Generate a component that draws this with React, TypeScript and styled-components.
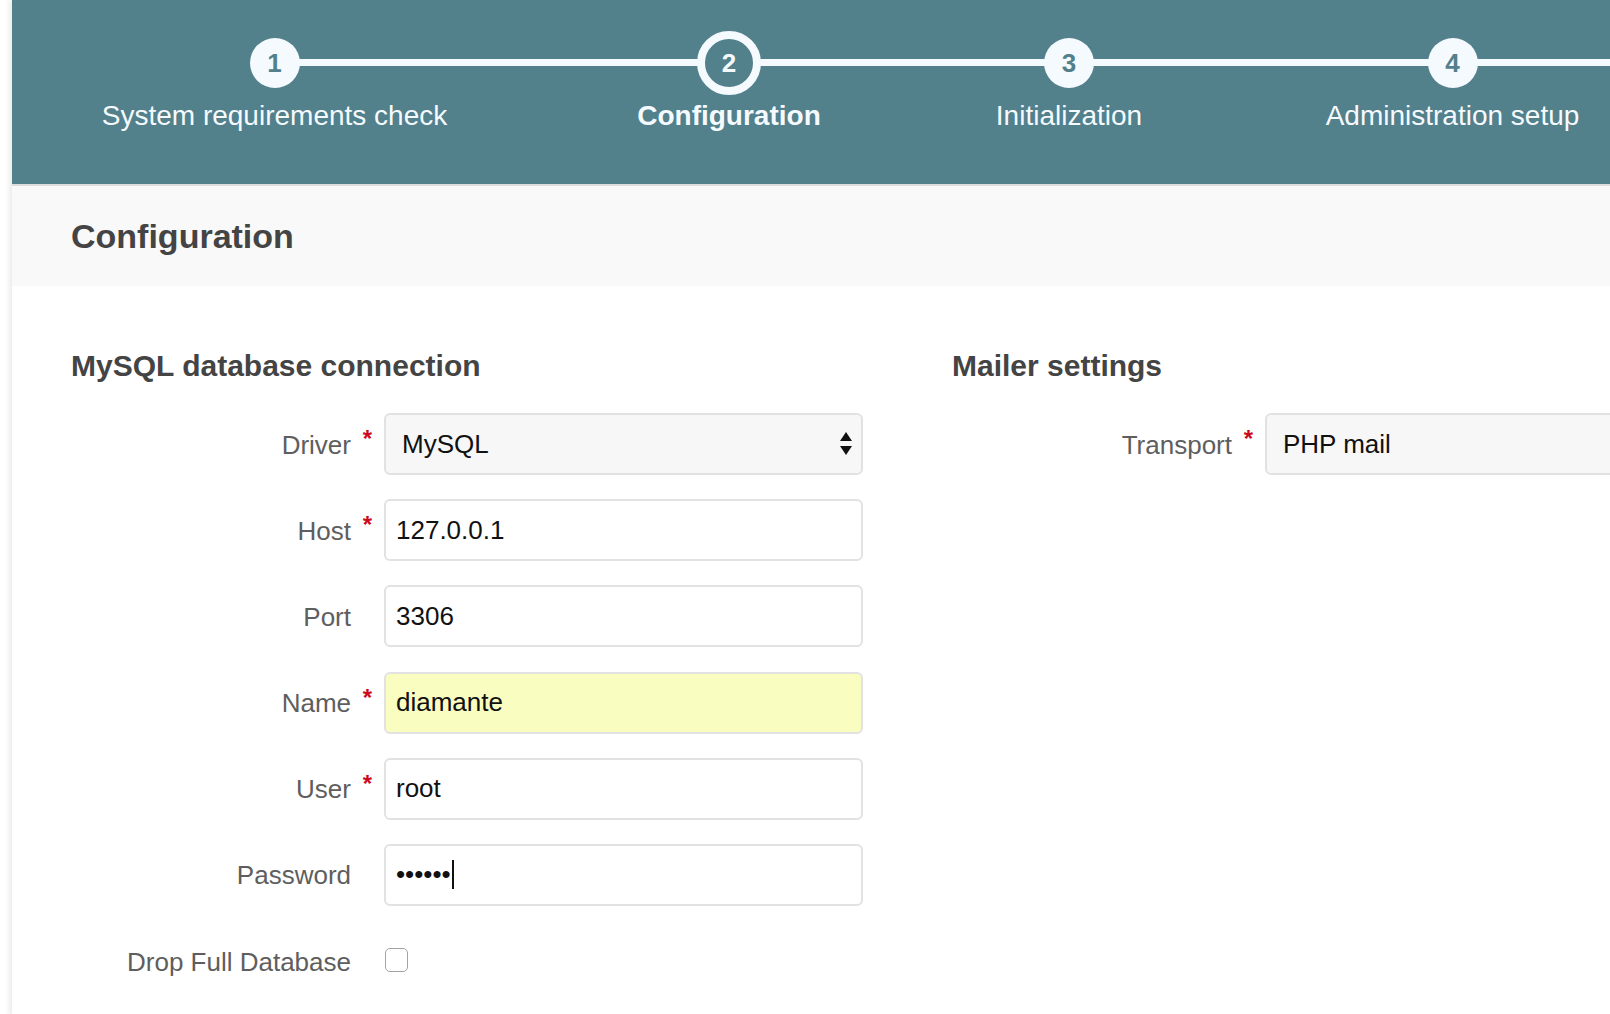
import React from 'react';
import styled, { createGlobalStyle } from 'styled-components';

const teal = '#52808b';
const light = '#f5faff';

const GlobalStyle = createGlobalStyle`
  html, body {
    margin: 0;
    padding: 0;
    background: #fff;
    overflow: hidden;
  }
  body {
    font-family: "Liberation Sans", Arial, Helvetica, sans-serif;
  }
`;

const Page = styled.div`
  margin-left: 12px;
  min-height: 1014px;
  background: #fff;
  box-shadow: -3px 0 5px rgba(0, 0, 0, 0.08);
  overflow: hidden;
`;

const Steps = styled.ol`
  display: grid;
  grid-template-columns: 525px 384px 296px 471px;
  height: 184px;
  margin: 0;
  padding: 0;
  list-style: none;
  background: ${teal};
  border-bottom: 2px solid #ddd;
  overflow: hidden;
`;

const Step = styled.li<{ $first?: boolean }>`
  position: relative;
  display: flex;
  flex-direction: column;
  align-items: center;
  padding-top: 31px;

  &::before {
    content: '';
    position: absolute;
    top: 59px;
    left: ${(p) => (p.$first ? '50%' : '0')};
    right: 0;
    height: 7px;
    background: ${light};
  }
`;

const CircleSlot = styled.div`
  position: relative;
  z-index: 1;
  height: 64px;
  display: flex;
  align-items: center;
`;

const Circle = styled.span<{ $active?: boolean }>`
  box-sizing: border-box;
  width: ${(p) => (p.$active ? 64 : 50)}px;
  height: ${(p) => (p.$active ? 64 : 50)}px;
  border-radius: 50%;
  border: ${(p) => (p.$active ? `8px solid ${light}` : 'none')};
  background: ${(p) => (p.$active ? teal : light)};
  color: ${(p) => (p.$active ? light : teal)};
  display: flex;
  align-items: center;
  justify-content: center;
  font-size: 26px;
  font-weight: bold;
`;

const StepLabel = styled.span<{ $active?: boolean }>`
  margin-top: 5px;
  font-size: 28px;
  line-height: 32px;
  font-weight: ${(p) => (p.$active ? 'bold' : 'normal')};
  color: ${light};
  white-space: nowrap;
`;

const TitleBar = styled.header`
  height: 100px;
  display: flex;
  align-items: center;
  padding-left: 59px;
  background: #f9f9f9;
`;

const Title = styled.h1`
  margin: 0;
  font-size: 34px;
  font-weight: bold;
  color: #444;
`;

const Content = styled.div`
  display: grid;
  grid-template-columns: 792px 792px;
  column-gap: 89px;
  padding: 62px 0 0 59px;
`;

const Section = styled.section`
  display: flex;
  flex-direction: column;
`;

const SectionTitle = styled.h2`
  margin: 0 0 29px;
  font-size: 30px;
  line-height: 36px;
  font-weight: bold;
  color: #444;
`;

const Row = styled.div`
  display: grid;
  grid-template-columns: 280px 33px 1fr;
  align-items: center;
  height: 62px;
  margin-bottom: 24.2px;
`;

const Label = styled.label`
  padding-top: 2px;
  text-align: right;
  font-size: 26px;
  color: #5e5e5e;
  white-space: nowrap;
`;

const Required = styled.span`
  align-self: start;
  margin-top: 14px;
  text-align: center;
  font-size: 24px;
  line-height: 24px;
  font-weight: bold;
  color: #cc0a1e;
`;

const fieldBox = `
  box-sizing: border-box;
  width: 100%;
  height: 62px;
  border: 2px solid #e2e2e2;
  border-radius: 6px;
  font-family: "Liberation Sans", Arial, sans-serif;
  font-size: 26px;
  color: #111;
`;

const TextInput = styled.input<{ $autofill?: boolean }>`
  ${fieldBox}
  padding: 0 10px;
  background: ${(p) => (p.$autofill ? '#fafdc0' : '#fff')};
  outline: none;
`;

const PasswordBox = styled.div`
  ${fieldBox}
  display: flex;
  align-items: center;
  padding: 0 10px;
  background: #fff;
`;

const Caret = styled.span`
  width: 2px;
  height: 29px;
  margin-left: 1px;
  background: #111;
`;

const Select = styled.div`
  ${fieldBox}
  display: flex;
  align-items: center;
  justify-content: space-between;
  padding: 0 9px 0 16px;
  background: #f7f7f7;
`;

const Checkbox = styled.input`
  appearance: none;
  box-sizing: border-box;
  width: 23px;
  height: 24px;
  margin: 1px 0 0 1px;
  border: 1px solid #a3a3a3;
  border-radius: 5px;
  background: #fff;
`;

const SelectArrows = () => (
  <svg width="12" height="24" viewBox="0 0 12 24">
    <path d="M6 0 L12 9 L0 9 Z" fill="#111" />
    <path d="M0 14 L12 14 L6 23 Z" fill="#111" />
  </svg>
);

type StepInfo = { num: number; title: string };

const steps: StepInfo[] = [
  { num: 1, title: 'System requirements check' },
  { num: 2, title: 'Configuration' },
  { num: 3, title: 'Initialization' },
  { num: 4, title: 'Administration setup' },
];

const current = 2;

const FieldRow = ({
  label,
  required,
  children,
}: {
  label: string;
  required?: boolean;
  children: React.ReactNode;
}) => (
  <Row>
    <Label>{label}</Label>
    {required ? <Required>*</Required> : <span />}
    <div>{children}</div>
  </Row>
);

const App = () => (
  <>
    <GlobalStyle />
    <Page>
      <Steps>
        {steps.map((s, i) => (
          <Step key={s.num} $first={i === 0}>
            <CircleSlot>
              <Circle $active={s.num === current}>{s.num}</Circle>
            </CircleSlot>
            <StepLabel $active={s.num === current}>{s.title}</StepLabel>
          </Step>
        ))}
      </Steps>

      <TitleBar>
        <Title>Configuration</Title>
      </TitleBar>

      <Content>
        <Section>
          <SectionTitle>MySQL database connection</SectionTitle>
          <FieldRow label="Driver" required>
            <Select>
              <span>MySQL</span>
              <SelectArrows />
            </Select>
          </FieldRow>
          <FieldRow label="Host" required>
            <TextInput readOnly defaultValue="127.0.0.1" />
          </FieldRow>
          <FieldRow label="Port">
            <TextInput readOnly defaultValue="3306" />
          </FieldRow>
          <FieldRow label="Name" required>
            <TextInput readOnly defaultValue="diamante" $autofill />
          </FieldRow>
          <FieldRow label="User" required>
            <TextInput readOnly defaultValue="root" />
          </FieldRow>
          <FieldRow label="Password">
            <PasswordBox>
              <span>••••••</span>
              <Caret />
            </PasswordBox>
          </FieldRow>
          <FieldRow label="Drop Full Database">
            <Checkbox type="checkbox" readOnly />
          </FieldRow>
        </Section>

        <Section>
          <SectionTitle>Mailer settings</SectionTitle>
          <FieldRow label="Transport" required>
            <Select>
              <span>PHP mail</span>
            </Select>
          </FieldRow>
        </Section>
      </Content>
    </Page>
  </>
);

export default App;
